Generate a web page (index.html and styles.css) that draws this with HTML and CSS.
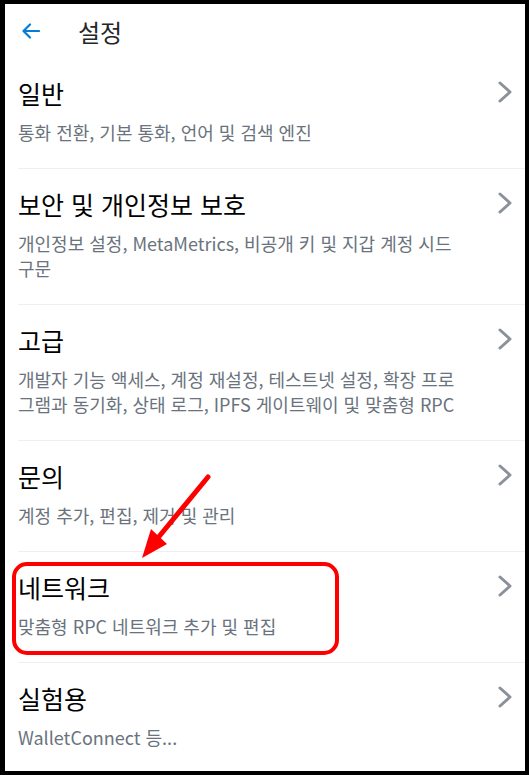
FILE: index.html
```html
<!DOCTYPE html>
<html lang="ko">
<head>
  <meta charset="UTF-8" />
  <meta name="viewport" content="width=device-width, initial-scale=1.0"/>
  <title>설정</title>
  <link rel="stylesheet" href="styles.css">
</head>
<body>
  <div class="screen">
    <header class="top-bar">
      <button class="back-btn" aria-label="뒤로">
        <svg width="18" height="16" viewBox="0 0 18 16">
          <path d="M17 8H2M8 1.5L1.5 8L8 14.5" fill="none" stroke="#037dd6" stroke-width="2.2" stroke-linecap="round" stroke-linejoin="round"/>
        </svg>
      </button>
      <h1 class="page-title">설정</h1>
    </header>

    <ul class="settings-list">
      <li class="setting-row">
        <div class="setting-text">
          <div class="setting-title">일반</div>
          <div class="setting-desc">통화 전환, 기본 통화, 언어 및 검색 엔진</div>
        </div>
        <svg class="chevron" width="14" height="22" viewBox="0 0 14 22"><path d="M2 2L12 11L2 20"/></svg>
      </li>
      <li class="setting-row">
        <div class="setting-text">
          <div class="setting-title">보안 및 개인정보 보호</div>
          <div class="setting-desc">개인정보 설정, MetaMetrics, 비공개 키 및 지갑 계정 시드 구문</div>
        </div>
        <svg class="chevron" width="14" height="22" viewBox="0 0 14 22"><path d="M2 2L12 11L2 20"/></svg>
      </li>
      <li class="setting-row">
        <div class="setting-text">
          <div class="setting-title">고급</div>
          <div class="setting-desc">개발자 기능 액세스, 계정 재설정, 테스트넷 설정, 확장 프로그램과 동기화, 상태 로그, IPFS 게이트웨이 및 맞춤형 RPC</div>
        </div>
        <svg class="chevron" width="14" height="22" viewBox="0 0 14 22"><path d="M2 2L12 11L2 20"/></svg>
      </li>
      <li class="setting-row">
        <div class="setting-text">
          <div class="setting-title">문의</div>
          <div class="setting-desc">계정 추가, 편집, 제거 및 관리</div>
        </div>
        <svg class="chevron" width="14" height="22" viewBox="0 0 14 22"><path d="M2 2L12 11L2 20"/></svg>
      </li>
      <li class="setting-row">
        <div class="setting-text">
          <div class="setting-title">네트워크</div>
          <div class="setting-desc">맞춤형 RPC 네트워크 추가 및 편집</div>
        </div>
        <svg class="chevron" width="14" height="22" viewBox="0 0 14 22"><path d="M2 2L12 11L2 20"/></svg>
      </li>
      <li class="setting-row">
        <div class="setting-text">
          <div class="setting-title">실험용</div>
          <div class="setting-desc">WalletConnect 등...</div>
        </div>
        <svg class="chevron" width="14" height="22" viewBox="0 0 14 22"><path d="M2 2L12 11L2 20"/></svg>
      </li>
    </ul>

    <!-- red annotation drawn over the screenshot -->
    <svg class="annotation" width="520" height="767" viewBox="0 0 520 767">
      <rect x="9" y="560" width="323" height="89" rx="13" fill="none" stroke="#ff0000" stroke-width="4"/>
      <path d="M203 473L152 535" stroke="#ff0000" stroke-width="5" stroke-linecap="round"/>
      <path d="M137 554L146 525L162 540Z" fill="#ff0000"/>
    </svg>
  </div>
</body>
</html>
```

FILE: styles.css
```css
body {
  margin: 0;
  padding: 0;
  background-color: #000;
  font-family: "Noto Sans CJK KR", "Noto Sans", sans-serif;
}

.screen {
  position: relative;
  width: 520px;
  height: 767px;
  margin: 4px 4px 4px 5px;
  background-color: #fff;
  overflow: hidden;
}

.top-bar {
  display: flex;
  align-items: center;
  height: 54px;
  padding-left: 17px;
}

.back-btn {
  display: flex;
  padding: 0;
  border: none;
  background: none;
  cursor: pointer;
}

.page-title {
  margin: 0 0 0 38px;
  font-size: 24px;
  font-weight: 400;
  color: #24272a;
}

.settings-list {
  list-style: none;
  margin: 0;
  padding: 0;
}

.setting-row {
  display: flex;
  align-items: flex-start;
  margin-left: 13px;
  padding: 18px 13px 23px 0;
  border-bottom: 1px solid #efefef;
}

.setting-row:last-child {
  border-bottom: none;
}

.setting-text {
  flex: 1;
  max-width: 450px;
}

.setting-title {
  font-size: 25px;
  line-height: 34px;
  color: #000;
}

.setting-desc {
  margin-top: 10px;
  font-size: 18px;
  line-height: 25px;
  color: #6a737d;
}

.chevron {
  margin: 5px 0 0 auto;
  fill: none;
  stroke: #8b9199;
  stroke-width: 3;
  stroke-linecap: round;
  stroke-linejoin: round;
}

.annotation {
  position: absolute;
  top: 0;
  left: 0;
  pointer-events: none;
}
```
